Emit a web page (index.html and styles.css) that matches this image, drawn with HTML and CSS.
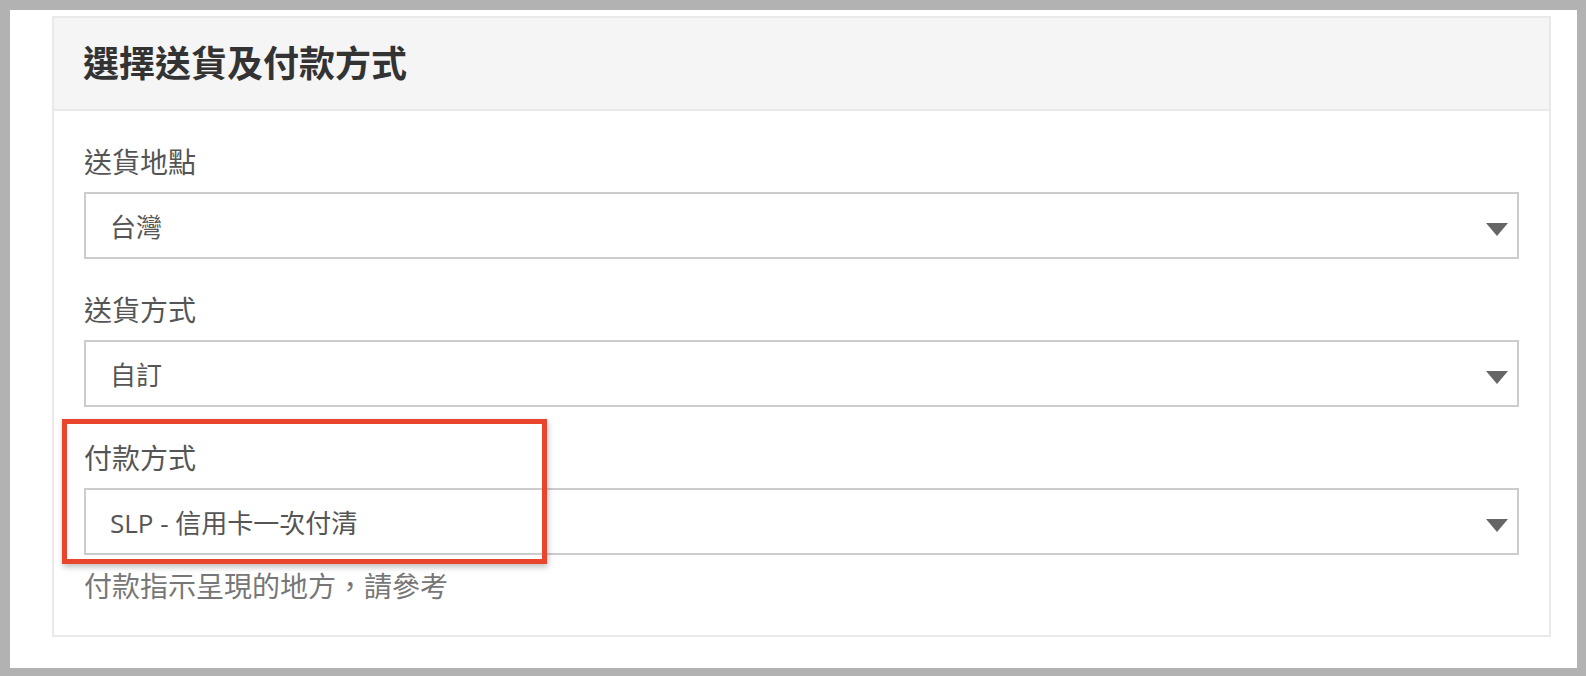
FILE: index.html
```html
<!DOCTYPE html>
<html lang="zh-Hant">
    <head>
        <meta charset="UTF-8" />
        <meta name="viewport" content="width=device-width, initial-scale=1.0" />
        <title>選擇送貨及付款方式</title>

        <link rel="stylesheet" href="styles.css">
    </head>
    <body>
        <div class="frame">
            <div class="panel">
                <div class="panel_header">
                    <h2>選擇送貨及付款方式</h2>
                </div>
                <div class="panel_body">
                    <div class="field">
                        <label>送貨地點</label>
                        <div class="select_box">
                            <span>台灣</span>
                            <svg class="caret" width="22" height="13" viewBox="0 0 22 13"><path d="M0 0H22L11 13Z" fill="#666"/></svg>
                        </div>
                    </div>
                    <div class="field">
                        <label>送貨方式</label>
                        <div class="select_box">
                            <span>自訂</span>
                            <svg class="caret" width="22" height="13" viewBox="0 0 22 13"><path d="M0 0H22L11 13Z" fill="#666"/></svg>
                        </div>
                    </div>
                    <div class="field highlighted">
                        <div class="highlight_box"></div>
                        <label>付款方式</label>
                        <div class="select_box">
                            <span>SLP - 信用卡一次付清</span>
                            <svg class="caret" width="22" height="13" viewBox="0 0 22 13"><path d="M0 0H22L11 13Z" fill="#666"/></svg>
                        </div>
                    </div>
                    <p class="help_text">付款指示呈現的地方，請參考</p>
                </div>
            </div>
        </div>
    </body>
</html>
```

FILE: styles.css
```css
body {
    margin: 0;
    background: #b2b2b2;
    font-family: "Open Sans", "Noto Sans CJK TC", sans-serif;
    color: #555;
}

.frame {
    margin: 10px 9px 8px 10px;
    height: 658px;
    box-sizing: border-box;
    padding: 6px 26px 31px 42px;
    background: #ffffff;
}

.panel {
    border: 2px solid #e9e9e9;
    background: #ffffff;
}

.panel_header {
    background: #f5f5f5;
    border-bottom: 2px solid #e9e9e9;
    padding: 28px 30px 27px 29px;
}

.panel_header h2 {
    margin: 0;
    font-size: 36px;
    line-height: 36px;
    font-weight: bold;
    color: #333;
}

.panel_body {
    padding: 37px 30px 35px 30px;
    display: flex;
    flex-direction: column;
    gap: 37px;
}

.field {
    display: flex;
    flex-direction: column;
    gap: 16px;
}

.field label {
    font-size: 28px;
    line-height: 28px;
    color: #555;
}

.select_box {
    height: 67px;
    box-sizing: border-box;
    border: 2px solid #cccccc;
    padding: 0 9px 0 24px;
    display: flex;
    align-items: center;
    justify-content: space-between;
    font-size: 26px;
    color: #555;
}

.caret {
    margin-top: 8px;
}

/* red marker round the payment field */
.highlighted {
    position: relative;
}

.highlight_box {
    position: absolute;
    left: -22px;
    top: -25px;
    width: 485px;
    height: 145px;
    box-sizing: border-box;
    border: 5px solid #e8452c;
    box-shadow: 1px 3px 6px rgba(0, 0, 0, 0.25);
    pointer-events: none;
}

.help_text {
    margin: -20px 0 0 0;
    font-size: 28px;
    line-height: 28px;
    color: #777;
}
```
